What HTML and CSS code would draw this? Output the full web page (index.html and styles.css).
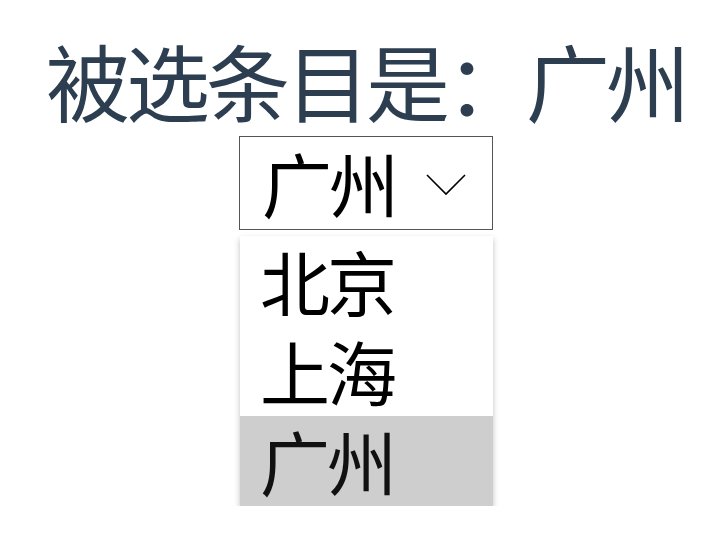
FILE: index.html
```html
<!DOCTYPE html>
<html lang="zh">
<head>
<meta charset="utf-8">
<link rel="stylesheet" href="styles.css">
</head>
<body>
<div class="app">
  <h1 class="title">被选条目是：广州</h1>
  <div class="picker">
    <div class="select">
      <span class="value">广州</span>
      <svg class="chev" width="40" height="22" viewBox="0 0 40 22"><path d="M1 1 L20 20 L39 1" fill="none" stroke="#000" stroke-width="1.6"/></svg>
    </div>
    <ul class="list">
      <li class="item">北京</li>
      <li class="item">上海</li>
      <li class="item selected">广州</li>
    </ul>
  </div>
</div>
</body>
</html>
```
FILE: styles.css
```css
html, body { margin: 0; padding: 0; background: #fff; }
body { font-family: "Noto Sans CJK SC", "Noto Sans", sans-serif; }
.app { display: flex; flex-direction: column; align-items: center; padding-left: 8px; }
.title {
  margin: 22px 0 0 0;
  font-size: 84px;
  font-weight: 400;
  letter-spacing: -4px;
  line-height: 116px;
  color: #2c3e50;
  white-space: nowrap;
}
.picker { display: flex; flex-direction: column; width: 254px; margin-top: -2px; }
.select {
  box-sizing: border-box;
  height: 94px;
  border: 1px solid #555;
  display: flex;
  align-items: center;
  padding-left: 22px;
  padding-right: 26px;
  justify-content: space-between;
}
.value { font-size: 70px; letter-spacing: -3px; line-height: 90px; color: #000; }
.chev { margin-top: 4px; }
.list {
  list-style: none;
  margin: 6px 0 0 1px;
  padding: 0;
  background: #fff;
  box-shadow: 0 3px 6px rgba(0,0,0,0.25);
}
.item {
  box-sizing: border-box;
  font-family: "Liberation Sans", "Noto Sans CJK SC", sans-serif;
  font-size: 70px;
  letter-spacing: -3px;
  height: 90px;
  padding-top: 12px;
  line-height: 78px;
  padding-left: 20px;
  color: #000;
}
.item.selected { background: #cecece; color: #111; }
```
